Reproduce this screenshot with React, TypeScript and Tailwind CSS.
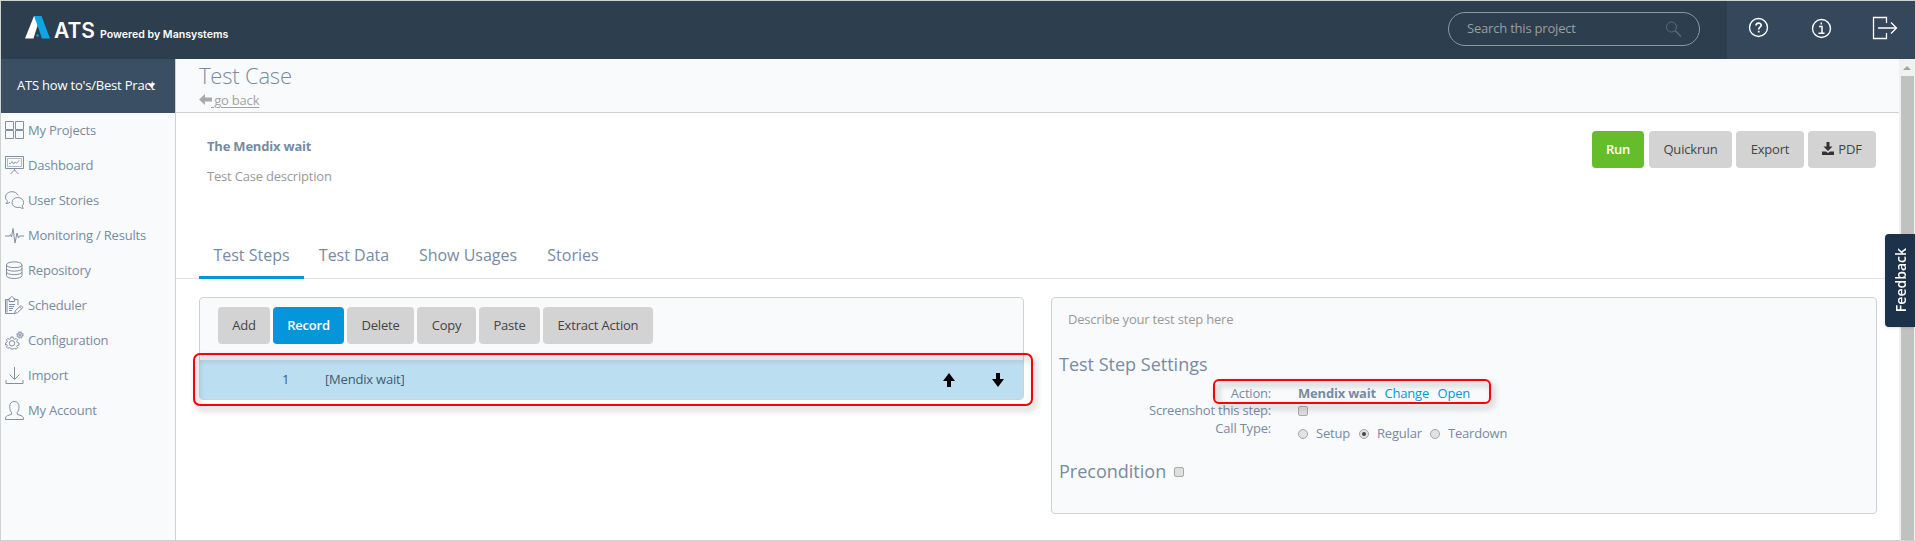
import React from "react";

const stroke = { fill: "none", stroke: "currentColor", strokeWidth: 1 } as const;

const icons: Record<string, React.ReactNode> = {
  projects: (
    <path d="M.5 .5h8v8h-8zM10.5 .5h8v8h-8zM.5 9.5h8v8h-8zM10.5 9.5h8v8h-8z" />
  ),
  dashboard: (
    <>
      <path d="M.5 .5h18v12H.5zM9.500 12.500v2M9.500 14l-4 4M9.500 14l4 4" />
      <path d="M2.500 2.500h14v8h-14z" strokeWidth=".6" />
      <path d="M4 7.500h1.500l1.500-2 1.500 2.500 1.500-2 1.500 1.200 3-3" strokeWidth=".9" />
    </>
  ),
  stories: (
    <path d="M13 4.500C12 2 9.800.700 7 .700 3.300.700.500 3 .500 6c0 1.800.800 3.200 2.200 4.200L1 12.500c1.500 0 3-.400 4-1.300M12.700 6.500c-3.300 0-5.700 2.200-5.700 5s2.400 5 5.700 5c.800 0 1.600-.100 2.300-.400 1 1 2 1.400 3.200 1.400l-1-2.600c.900-.900 1.400-2.100 1.400-3.400 0-2.800-2.600-5-5.900-5z" />
  ),
  monitoring: <path d="M0 10h4.500l1-1.500L6.500 11 8 2.500 10 17l2-10 1.500 5 1-2H19" />,
  repository: (
    <path d="M1.500 4c0-4.200 15.500-4.200 15.500 0v10.500c0 4-15.500 4-15.500 0zM1.500 4c0 3.500 15.500 3.500 15.500 0M1.500 7.500c0 3.500 15.500 3.500 15.500 0M1.500 11c0 3.500 15.500 3.500 15.500 0" />
  ),
  scheduler: (
    <path d="M4 3.500H.5v14H10M9.500 3.500H13V9M4 2.500h1.200c0-2.500 3.300-2.500 3.300 0h1.200v3H4zM2 3.500v13M4 8.500h6M4 10.500h5M4 12.500h4M4 14.500h3M10.500 14.500l5.500-5 2 2-5.500 5.200-3 .800zM14.500 10.800l2 2" />
  ),
  configuration: (
    <>
      <path d="M6 6h2l.4 1.700 1.300.6 1.500-.9 1.400 1.400-.9 1.500.6 1.300 1.700.4v2l-1.700.4-.6 1.300.9 1.000-1.400 1.400-1.500-.7-1.300.5L8 18H6l-.4-.9-1.300-.5-1.500.7-1.400-1.400.9-1.100-.6-1.300L.5 14v-2l1.200-.4.6-1.300-.9-1.500 1.400-1.400 1.500.9 1.300-.6z" />
      <circle cx="7" cy="12.300" r="2.700" />
      <circle cx="15" cy="4" r="3.200" strokeDasharray="1.500 1" />
      <circle cx="15" cy="4" r="2.400" />
      <circle cx="15" cy="4" r="1" />
    </>
  ),
  import: <path d="M9.500 1v12M4.500 8.500l5 5 5-5M1 14v3.500h17V14" />,
  account: (
    <path d="M.5 18.500c0-2.500.5-3.300 2-3.800l4-1.400v-2C5.200 10 4.700 8.200 4.700 5.500c0-3 1.500-5 4.600-5s4.700 2 4.700 5c0 2.700-.6 4.500-1.800 5.800v2l4 1.400c1.600.5 2.300 1.300 2.300 3.800z" />
  ),
};

const menu: [string, string][] = [
  ["projects", "My Projects"],
  ["dashboard", "Dashboard"],
  ["stories", "User Stories"],
  ["monitoring", "Monitoring / Results"],
  ["repository", "Repository"],
  ["scheduler", "Scheduler"],
  ["configuration", "Configuration"],
  ["import", "Import"],
  ["account", "My Account"],
];

function Header() {
  return (
    <header className="flex h-[58px] shrink-0 bg-[#2d3e4e] text-white">
      <div className="flex flex-1 items-start pl-6 pt-[15px]">
        <svg width="25" height="23" viewBox="0 0 25 23">
          <path d="M9 0h4v8L8.500 22.500H0z" fill="#fff" />
          <path d="M9 0h7.500L25 22.500h-8L12.300 9z" fill="#0fa5e3" />
          <circle cx="12.500" cy="19.500" r="1.200" fill="#0fa5e3" />
        </svg>
        <div className="ml-1 flex items-baseline font-['Inter'] tracking-normal">
          <span className="w-[46px] text-[21px] leading-[29px] font-semibold">ATS</span>
          <span className="text-[10.600px] font-semibold">Powered by Mansystems</span>
        </div>
      </div>
      <div className="mr-[27px] mt-[11px] flex h-[34px] w-[252px] items-center justify-between rounded-full border border-[#8e98a1] pr-[17px] pl-[18px]">
        <span className="text-[#9c9fa1]">Search this project</span>
        <svg width="17" height="18" viewBox="0 0 17 18" className="text-[#5d6c78]" {...stroke}>
          <circle cx="6.500" cy="7" r="5" />
          <path d="M10 10.500l6 6" strokeWidth="1.500" />
        </svg>
      </div>
      <div className="flex w-[188px] items-start bg-[#34475b]">
        <svg className="mt-4 ml-[21px]" width="21" height="21" viewBox="0 0 21 21" {...stroke}>
          <circle cx="10.500" cy="10.500" r="9" strokeWidth="1.400" />
          <path d="M8 8.600c0-3.400 5.200-3.300 5.200-.400 0 2-2.500 1.900-2.500 4.200M10.700 13.800v1.800" strokeWidth="1.700" />
        </svg>
        <svg className="mt-[17px] ml-[42px]" width="21" height="21" viewBox="0 0 21 21" {...stroke}>
          <circle cx="10.500" cy="10.500" r="9" strokeWidth="1.400" />
          <path d="M8 8.500h3v6.500M7.500 15.300h6M10.300 4.500v2" strokeWidth="1.500" />
        </svg>
        <svg className="mt-[15px] ml-[40px]" width="26" height="24" viewBox="0 0 26 24" {...stroke}>
          <path d="M14.500 7V1.500H1.500v21h13V17M6 12h18.500M19 6.500l5.500 5.500-5.500 5.500" strokeWidth="1.300" />
        </svg>
      </div>
    </header>
  );
}

function Sidebar() {
  return (
    <aside className="flex w-[175px] shrink-0 flex-col border-r border-[#cdd1d5] bg-[#f9fafc]">
      <div className="relative flex h-[54px] items-center bg-[#3a4f63] pl-4 text-white">
        <span className="whitespace-nowrap">ATS how to's/Best Pract</span>
        <svg className="absolute top-[25px] left-[147px]" width="7" height="4" viewBox="0 0 7 4">
          <path d="M0 0h7L3.500 4z" fill="#fff" />
        </svg>
      </div>
      {menu.map(([icon, label]) => (
        <div key={label} className="flex h-[35px] items-center gap-1 pl-1">
          <svg width="19" height="19" viewBox="0 0 19 19" className="text-[#8390a3]" {...stroke}>
            {icons[icon]}
          </svg>
          <span>{label}</span>
        </div>
      ))}
    </aside>
  );
}

const gray = "flex h-[37px] items-center justify-center rounded bg-[#d3d3d3] text-[#444]";

function Arrow({ down = false }: { down?: boolean }) {
  return (
    <svg width="12" height="14" viewBox="0 0 12 14" className={down ? "rotate-180" : ""}>
      <path d="M6 0l6 8H8v6H4V8H0z" fill="#000" />
    </svg>
  );
}

function Check() {
  return <span className="block size-[10px] rounded-[2px] border border-[#a9a9a9] bg-[#dedede]" />;
}

function Radio({ on = false }: { on?: boolean }) {
  return (
    <span className="flex size-[10px] items-center justify-center rounded-full border border-[#a5a5a5] bg-[#e2e2e2]">
      {on && <span className="size-1 rounded-full bg-[#444]" />}
    </span>
  );
}

function StepsPanel() {
  return (
    <section className="relative h-[103px] w-[825px] rounded border border-[#cfd2d5] bg-[#f9fafc]">
      <div className="flex gap-[3px] pt-[9px] pl-[18px]">
        <div className={`${gray} w-[52px]`}>Add</div>
        <div className="flex h-[37px] w-[71px] items-center justify-center rounded bg-[#0595db] font-semibold text-white">
          Record
        </div>
        <div className={`${gray} w-[67px]`}>Delete</div>
        <div className={`${gray} w-[59px]`}>Copy</div>
        <div className={`${gray} w-[61px]`}>Paste</div>
        <div className={`${gray} w-[110px]`}>Extract Action</div>
      </div>
      <div className="mt-4 flex h-[39px] items-center rounded-b-[3px] bg-[#bbdff1] text-[#405a75]">
        <span className="w-[125px] pl-[82px]">1</span>
        <span className="flex-1">[Mendix wait]</span>
        <Arrow />
        <span className="w-[37px]" />
        <Arrow down />
        <span className="w-[19px]" />
      </div>
      <div className="absolute top-[55px] left-[-7px] h-[53px] w-[840px] rounded-[7px] border-2 border-[#fb0007] drop-shadow-[3px_4px_3px_rgba(0,0,0,0.35)]" />
    </section>
  );
}

function SettingsPanel() {
  return (
    <section className="relative flex h-[217px] w-[826px] flex-col rounded border border-[#cfd2d5] bg-[#f9fafc]">
      <p className="mt-[11px] pl-4 leading-5 text-[#999]">Describe your test step here</p>
      <h2 className="mt-[23px] pl-[7px] text-lg leading-6 tracking-normal">Test Step Settings</h2>
      <div className="mt-[9px] grid grid-cols-[219px_1fr] gap-x-[27px] leading-[17px]">
        <span className="text-right">Action:</span>
        <span className="flex gap-[8.500px]">
          <b>Mendix wait</b>
          <a className="text-[#0595db]">Change</a>
          <a className="text-[#0595db]">Open</a>
        </span>
        <span className="text-right">Screenshot this step:</span>
        <span className="flex items-center"><Check /></span>
        <span className="pt-px text-right">Call Type:</span>
        <span className="flex items-center pt-[6px]">
          <Radio />
          <span className="w-[51px] pl-2">Setup</span>
          <Radio on />
          <span className="w-[61px] pl-2">Regular</span>
          <Radio />
          <span className="pl-2">Teardown</span>
        </span>
      </div>
      <div className="mt-[17px] flex items-center gap-2 pl-[7px]">
        <h2 className="text-lg leading-6 tracking-normal">Precondition</h2>
        <span className="pt-0.5"><Check /></span>
      </div>
      <div className="absolute top-[81px] left-[161px] h-[25px] w-[278px] rounded-[6px] border-2 border-[#fb0007] drop-shadow-[3px_4px_3px_rgba(0,0,0,0.35)]" />
    </section>
  );
}

export default function App() {
  return (
    <div className="relative flex h-[541px] w-[1916px] flex-col overflow-hidden border border-[#d0d2d0] bg-white font-['Open_Sans',sans-serif] text-[13px] tracking-[-0.200px] text-[#778ba2]">
      <Header />
      <div className="flex min-h-0 flex-1">
        <Sidebar />
        <main className="flex min-w-0 flex-1 flex-col">
          <div className="h-[54px] shrink-0 border-b border-[#cdd1d5] bg-[#f9fafc] pl-[23px]">
            <h1 className="pt-[2px] text-[22px] leading-[28px] font-light">Test Case</h1>
            <div className="flex items-start pt-px leading-5 text-[#a3a3a3]">
              <svg width="13" height="11" viewBox="0 0 13 11" className="mt-[4px]">
                <path d="M0 5.500L6 0v3.500h7v4H6V11z" fill="#aaa" />
              </svg>
              <span className="-ml-px whitespace-pre underline underline-offset-2"> go back</span>
            </div>
          </div>
          <div className="flex h-[131px] shrink-0 justify-between pr-[23px] pl-[31px]">
            <div className="pt-[23px] leading-5">
              <p className="font-bold">The Mendix wait</p>
              <p className="mt-[10px] text-[#999]">Test Case description</p>
            </div>
            <div className="flex gap-1 pt-[18px]">
              <div className="mr-px flex h-[37px] w-[52px] items-center justify-center rounded bg-[#66bd2b] font-semibold text-white">
                Run
              </div>
              <div className={`${gray} w-[83px]`}>Quickrun</div>
              <div className={`${gray} w-[68px]`}>Export</div>
              <div className={`${gray} w-[68px] gap-1`}>
                <svg width="12" height="13" viewBox="0 0 12 13" className="-mt-[2px]">
                  <path d="M4.500 0h3v4.500H10.500L6 9 1.500 4.500h3zM0 9.500h4l2 1.500 2-1.500h4V13H0z" fill="#333" />
                </svg>
                PDF
              </div>
            </div>
          </div>
          <nav className="flex h-[35px] shrink-0 border-b border-[#e1e3e5] pl-[23px] text-base leading-[22px] tracking-normal">
            <span className="-mb-px w-[105px] border-b-3 border-[#0595db] text-center">Test Steps</span>
            <span className="w-[100px] text-center">Test Data</span>
            <span className="w-[128px] text-center">Show Usages</span>
            <span className="w-[82px] text-center">Stories</span>
          </nav>
          <div className="flex gap-[27px] pt-[18px] pl-[23px]">
            <StepsPanel />
            <SettingsPanel />
          </div>
        </main>
        <div className="flex w-4 shrink-0 flex-col items-center bg-[#f1f1f1] pt-[7px]">
          <svg width="8" height="4" viewBox="0 0 8 4">
            <path d="M0 4l4-4 4 4z" fill="#a3a3a3" />
          </svg>
          <div className="mt-[6px] w-[13px] flex-1 bg-[#c1c1c1]" />
        </div>
      </div>
      <div className="absolute top-[233px] right-0 flex h-[93px] w-[30px] items-center justify-center rounded-l-sm bg-[#1c314a] shadow-sm">
        <span className="rotate-180 pr-0.5 text-sm leading-5 font-semibold tracking-normal text-white [writing-mode:vertical-rl]">
          Feedback
        </span>
      </div>
    </div>
  );
}
